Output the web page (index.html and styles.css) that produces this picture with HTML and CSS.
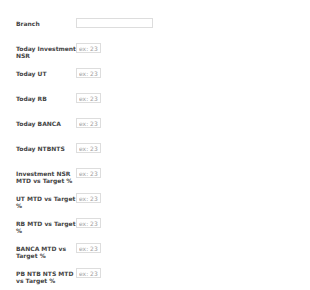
FILE: index.html
```html
<!DOCTYPE html>
<html lang="en">

<head>
  <meta charset="UTF-8" />
  <title>Daily Report</title>
  <link rel="stylesheet" href="styles.css">
</head>

<body>
  <form class="report">
    <div class="row">
      <label class="label">Branch</label>
      <input type="text" class="field field-wide" />
    </div>
    <div class="row">
      <label class="label">Today Investment NSR</label>
      <input type="text" class="field" placeholder="ex: 23" />
    </div>
    <div class="row">
      <label class="label">Today UT</label>
      <input type="text" class="field" placeholder="ex: 23" />
    </div>
    <div class="row">
      <label class="label">Today RB</label>
      <input type="text" class="field" placeholder="ex: 23" />
    </div>
    <div class="row">
      <label class="label">Today BANCA</label>
      <input type="text" class="field" placeholder="ex: 23" />
    </div>
    <div class="row">
      <label class="label">Today NTBNTS</label>
      <input type="text" class="field" placeholder="ex: 23" />
    </div>
    <div class="row">
      <label class="label">Investment NSR MTD vs Target %</label>
      <input type="text" class="field" placeholder="ex: 23" />
    </div>
    <div class="row">
      <label class="label">UT MTD vs Target %</label>
      <input type="text" class="field" placeholder="ex: 23" />
    </div>
    <div class="row">
      <label class="label">RB MTD vs Target %</label>
      <input type="text" class="field" placeholder="ex: 23" />
    </div>
    <div class="row">
      <label class="label">BANCA MTD vs Target %</label>
      <input type="text" class="field" placeholder="ex: 23" />
    </div>
    <div class="row">
      <label class="label">PB NTB NTS MTD vs Target %</label>
      <input type="text" class="field" placeholder="ex: 23" />
    </div>
  </form>
</body>

</html>
```

FILE: styles.css
```css
body {
  margin: 0;
  background: #ffffff;
  font-family: "DejaVu Sans", Verdana, sans-serif;
}

.report {
  padding: 18px 0 0 16px;
}

.row {
  display: flex;
  align-items: flex-start;
  height: 25px;
}

.label {
  width: 60px;
  padding-top: 2px;
  font-size: 6px;
  line-height: 7px;
  font-weight: bold;
  color: #444444;
}

.field {
  box-sizing: border-box;
  width: 25px;
  height: 10px;
  margin: 0;
  padding: 0 2px;
  border: 1px solid #dddddd;
  font-family: "DejaVu Sans", Verdana, sans-serif;
  font-size: 6px;
  color: #444444;
  outline: none;
}

.field::placeholder {
  color: #a0a0a0;
}

.field-wide {
  width: 77px;
}
```
